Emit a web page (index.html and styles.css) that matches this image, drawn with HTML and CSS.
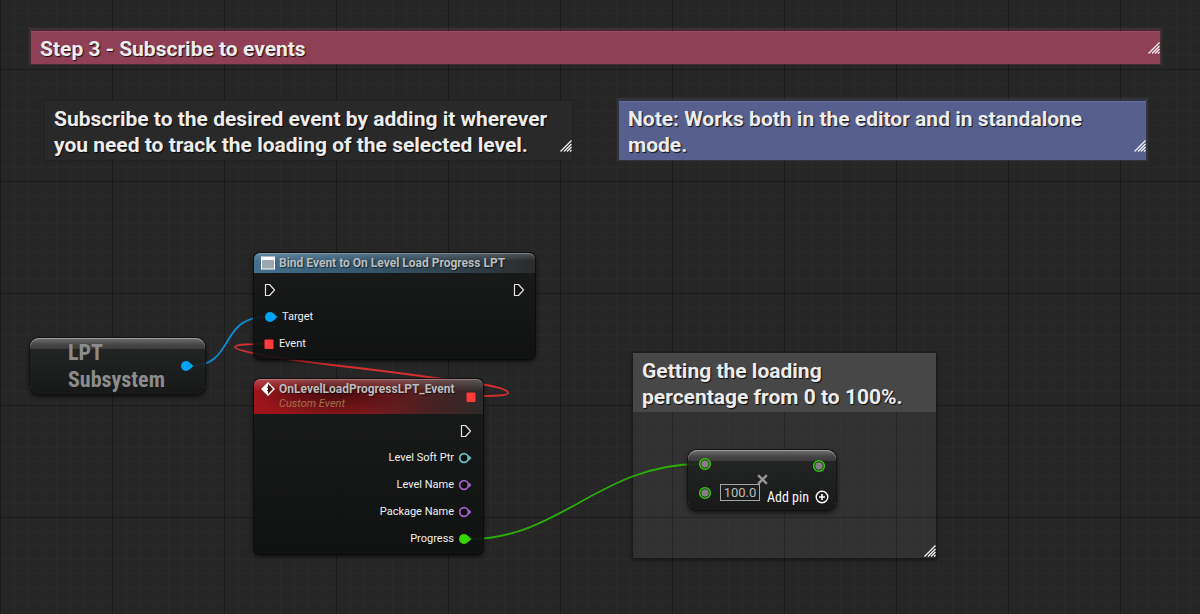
FILE: index.html
```html
<!DOCTYPE html>
<html lang="en">
<head>
<meta charset="utf-8">
<title>Event graph</title>
<link rel="stylesheet" href="styles.css">
</head>
<body>
<svg class="defs" aria-hidden="true">
  <symbol id="grip" viewBox="0 0 12 12"><path d="M0.5 11.5L11.5 0.5M4 11.5L11.5 4M7 11.5L11.5 7M10 11.5L11.5 10" fill="none" stroke="#f2f2f2" stroke-width="1.3"/></symbol>
  <symbol id="exec" viewBox="0 0 12 14"><path d="M1.5 1.5H5.5L10.5 7L5.500 12.5H1.500Z" fill="#111" stroke="#e4e4e4" stroke-width="1.200" stroke-linejoin="round"/></symbol>
  <symbol id="pin-full" viewBox="0 0 14 12"><circle cx="6" cy="6" r="5" fill="currentColor"/><path d="M10 3L13.500 6L10 9Z" fill="currentColor"/></symbol>
  <symbol id="pin-open" viewBox="0 0 14 12"><circle cx="6" cy="6" r="4.300" fill="#0c0e0d" stroke="currentColor" stroke-width="1.700"/><path d="M10.500 3L13.500 6L10.500 9Z" fill="currentColor"/></symbol>
  <symbol id="pin-math" viewBox="0 0 14 14"><circle cx="7" cy="7" r="5.300" fill="#151515" stroke="#31c90a" stroke-width="1.600"/><circle cx="7" cy="7" r="3.800" fill="#857f83"/></symbol>
  <symbol id="delegate" viewBox="0 0 10 10"><rect x="0.500" y="0.500" width="9" height="9.500" rx="1" fill="#ff3a3a"/></symbol>
</svg>
<main class="graph">
  <section class="comment comment-step">
    <h1 class="comment-title">Step 3 - Subscribe to events</h1>
    <svg class="grip"><use href="#grip"/></svg>
  </section>
  <section class="comment comment-subscribe">
    <h2 class="comment-title">Subscribe to the desired event by adding it wherever you need to track the loading of the selected level.</h2>
    <svg class="grip"><use href="#grip"/></svg>
  </section>
  <section class="comment comment-note">
    <h2 class="comment-title">Note: Works both in the editor and in standalone mode.</h2>
    <svg class="grip"><use href="#grip"/></svg>
  </section>
  <section class="comment comment-percent">
    <h2 class="comment-title">Getting the loading percentage from 0 to 100%.</h2>
    <svg class="grip"><use href="#grip"/></svg>
  </section>

  <svg class="wires" aria-hidden="true">
    <path d="M190 366C236 366 218 317 266 317" stroke="#0c8fd6"/>
    <path d="M476 396C500 396 508 395 508 393C508 386 460 381 435 378C400 373 350 367 332 365C300 361 235 352 235 347C235 344 250 344 266 344" stroke="#d92f31"/>
    <path d="M470 539C560 539 600 464 700 464" stroke="#2fae09"/>
  </svg>

  <article class="node node-compact node-subsystem">
    <h3 class="subsystem-title">LPT<br>Subsystem</h3>
    <svg class="pin object"><use href="#pin-full"/></svg>
  </article>

  <article class="node node-bind">
    <header class="node-head">
      <svg class="head-icon" viewBox="0 0 14 14"><rect y="0.500" width="14" height="13" fill="#fff"/><rect x="1" y="4" width="12" height="8.500" fill="#9ba7b1"/></svg>
      <h3 class="node-title">Bind Event to On Level Load Progress LPT</h3>
    </header>
    <div class="rows">
      <div class="row row-split"><svg class="exec"><use href="#exec"/></svg><svg class="exec"><use href="#exec"/></svg></div>
      <div class="row"><svg class="pin object"><use href="#pin-full"/></svg><span>Target</span></div>
      <div class="row"><svg class="delegate"><use href="#delegate"/></svg><span>Event</span></div>
    </div>
  </article>

  <article class="node node-event">
    <header class="node-head">
      <svg class="head-icon" viewBox="0 0 14 14"><path d="M7 1L13 7L7 13L1 7Z" fill="#4a0c0e" stroke="#fff" stroke-width="1.400"/><path d="M7 1V4.500L4.800 7L7 9.500V13L1 7Z" fill="#fff"/><path d="M4.500 7H7" stroke="#fff" stroke-width="2"/></svg>
      <div class="titles">
        <h3 class="node-title">OnLevelLoadProgressLPT_Event</h3>
        <p class="node-subtitle">Custom Event</p>
      </div>
      <svg class="delegate"><use href="#delegate"/></svg>
    </header>
    <div class="rows rows-out">
      <div class="row"><svg class="exec"><use href="#exec"/></svg></div>
      <div class="row"><span>Level Soft Ptr</span><svg class="pin soft"><use href="#pin-open"/></svg></div>
      <div class="row"><span>Level Name</span><svg class="pin name"><use href="#pin-open"/></svg></div>
      <div class="row"><span>Package Name</span><svg class="pin name"><use href="#pin-open"/></svg></div>
      <div class="row"><span>Progress</span><svg class="pin float"><use href="#pin-full"/></svg></div>
    </div>
  </article>

  <article class="node node-compact node-multiply">
    <div class="math-in">
      <svg class="math-pin"><use href="#pin-math"/></svg>
      <div class="math-value">
        <svg class="math-pin"><use href="#pin-math"/></svg>
        <input class="value" type="text" value="100.0" aria-label="Multiplier">
      </div>
    </div>
    <div class="math-out">
      <svg class="math-pin"><use href="#pin-math"/></svg>
      <button class="add-pin" type="button">Add pin
        <svg class="plus" viewBox="0 0 14 14"><circle cx="7" cy="7" r="5.800" fill="none" stroke="#fff" stroke-width="1.400"/><path d="M4 7H10M7 4V10" stroke="#fff" stroke-width="1.600"/></svg>
      </button>
    </div>
    <svg class="times" viewBox="0 0 10 10"><path d="M1 1L9 9M9 1L1 9" stroke="#969696" stroke-width="2.200"/></svg>
  </article>
</main>
</body>
</html>
```
FILE: styles.css
```css
* { box-sizing: border-box; }
body { margin: 0; background: #262626; font-family: Roboto, "Open Sans", sans-serif; color: #ececec; }
h1, h2, h3, p { margin: 0; }
svg { display: block; flex: none; }
.defs { position: absolute; width: 0; height: 0; }

.graph {
  position: relative;
  min-height: 100vh;
  overflow: hidden;
  background-image:
    linear-gradient(90deg, #1b1b1b 1px, transparent 1px),
    linear-gradient(#1b1b1b 1px, transparent 1px),
    linear-gradient(90deg, #2a2a2a 1px, transparent 1px),
    linear-gradient(#2a2a2a 1px, transparent 1px);
  background-size: 112px 112px, 112px 112px, 14px 14px, 14px 14px;
  background-position: 0 0, 0 69px, 0 0, 0 13px;
}

/* Comment boxes */
.comment { position: absolute; }
.comment-title {
  padding: 5px 9px 2px;
  font-size: 21px;
  line-height: 26px;
  font-weight: 700;
  color: #ececec;
  text-shadow: 1px 1px 1px #000000d0;
}
.grip { position: absolute; right: 0; bottom: 8px; width: 12px; height: 12px; }
.comment-step { left: 31px; top: 31px; width: 1129px; background: #8f4056; box-shadow: inset 0 1px 0 #9c4961, 0 -1px 0 2px #8f405640; }
.comment-step .grip { bottom: 10px; }
.comment-subscribe { left: 45px; top: 101px; width: 527px; background: #292929; box-shadow: 0 0 3px 1px #1f1f1f90; }
.comment-note { left: 619px; top: 101px; width: 527px; padding-right: 20px; background: #565f8e; box-shadow: inset 0 1px 0 #646d9c, 0 -1px 0 2px #565f8e40; }
.comment-percent { left: 633px; top: 353px; width: 303px; height: 205px; background: #ffffff0d; box-shadow: 0 1px 4px 1px #00000080; }
.comment-percent .comment-title { background: #474747; }
.comment-percent .grip { bottom: 1px; }

.wires { position: absolute; inset: 0; width: 100%; height: 100%; fill: none; stroke-width: 1.8; }

/* Nodes */
.node {
  position: absolute;
  border-radius: 6px;
  background: linear-gradient(#191b1ae8, #0e100fe8);
  box-shadow: 0 0 0 1px #080808c0, 0 2px 4px 1px #00000090;
}
.node-head { display: flex; gap: 4px; padding: 0 7px; border-radius: 6px 6px 0 0; }
.head-icon { width: 14px; height: 14px; }
.node-title { font-size: 12px; line-height: 14px; font-weight: 700; color: #b9bdbf; text-shadow: 1px 1px 1px #00000090; white-space: nowrap; }
.rows { padding: 3px 10px 2px; }
.row { display: flex; align-items: center; gap: 4px; height: 27px; font-size: 11px; color: #f0f0f0; }
.row-split { justify-content: space-between; }
.rows-out { padding: 3px 11px 2px; }
.rows-out .row { justify-content: flex-end; }
.exec { width: 12px; height: 14px; }
.pin { width: 14px; height: 12px; }
.delegate { width: 10px; height: 10px; }
.object { color: #00a4f5; }
.soft { color: #6cc4c4; }
.name { color: #a062c4; }
.float { color: #38d500; }

.node-bind { left: 254px; top: 253px; width: 281px; }
.node-bind .node-head {
  padding-top: 3px;
  padding-bottom: 3px;
  background: linear-gradient(#ffffff30, #ffffff00 40%), linear-gradient(90deg, #44718f, #34566d 40%, #303f49 75%, #2a2c2d);
  box-shadow: inset 0 1px 0 #a0b4c080;
}
.node-bind .delegate { margin-right: 1px; }

.node-event { left: 254px; top: 379px; width: 229px; }
.node-event .node-head {
  padding-top: 3px;
  padding-bottom: 2px;
  align-items: flex-start;
  background: linear-gradient(#ffffff38, #ffffff00 35%), radial-gradient(ellipse 80px 24px at 35% 40%, #3d0a0ce0, #3d0a0c00), linear-gradient(90deg, #a0141b, #84181c 45%, #4b2021 75%, #2d2a2a);
  box-shadow: inset 0 1px 0 #d0a0a080;
}
.titles { flex: 1; }
.node-subtitle { font-size: 11px; line-height: 16px; font-style: italic; color: #a86f4c; }
.node-event .delegate { align-self: center; }

.node-compact {
  border-radius: 9px;
  background: linear-gradient(#737373, #484848 6px, #3a3a3a 11px, #222323e8 11px, #151616e8 100%);
  box-shadow: inset 0 1px 0 #9a9a9a, 0 0 0 1px #101010c0, 0 2px 4px 1px #000000a0;
}
.node-subsystem { left: 30px; top: 338px; width: 175px; display: flex; align-items: center; gap: 12px; padding: 1px 11px 1px 38px; }
.subsystem-title { flex: 1; font-family: "Roboto Condensed", Roboto, sans-serif; font-size: 22px; line-height: 27px; font-weight: 700; color: #8c8c8c; }

.node-multiply { left: 688px; top: 450px; width: 148px; display: flex; justify-content: space-between; padding: 7px 7px 5px 10px; }
.math-in, .math-out { display: flex; flex-direction: column; }
.math-in { gap: 13px; padding-bottom: 4px; }
.math-value { display: flex; align-items: center; gap: 8px; }
.math-pin { width: 14px; height: 14px; }
.value { width: 40px; height: 17px; padding: 0; border: 1px solid #a5a5a5; background: transparent; color: #bcbcbc; font: 13px Roboto, sans-serif; text-align: center; }
.math-out { align-items: flex-end; justify-content: space-between; padding-top: 2px; }
.math-out .math-pin { margin-right: 3px; }
.add-pin { display: flex; align-items: center; gap: 6px; padding: 0; border: 0; background: none; color: #f4f4f4; font: 14px/16px "Roboto Condensed", Roboto, sans-serif; white-space: nowrap; }
.plus { width: 14px; height: 14px; }
.times { position: absolute; left: 69px; top: 24px; width: 11px; height: 11px; }
```
